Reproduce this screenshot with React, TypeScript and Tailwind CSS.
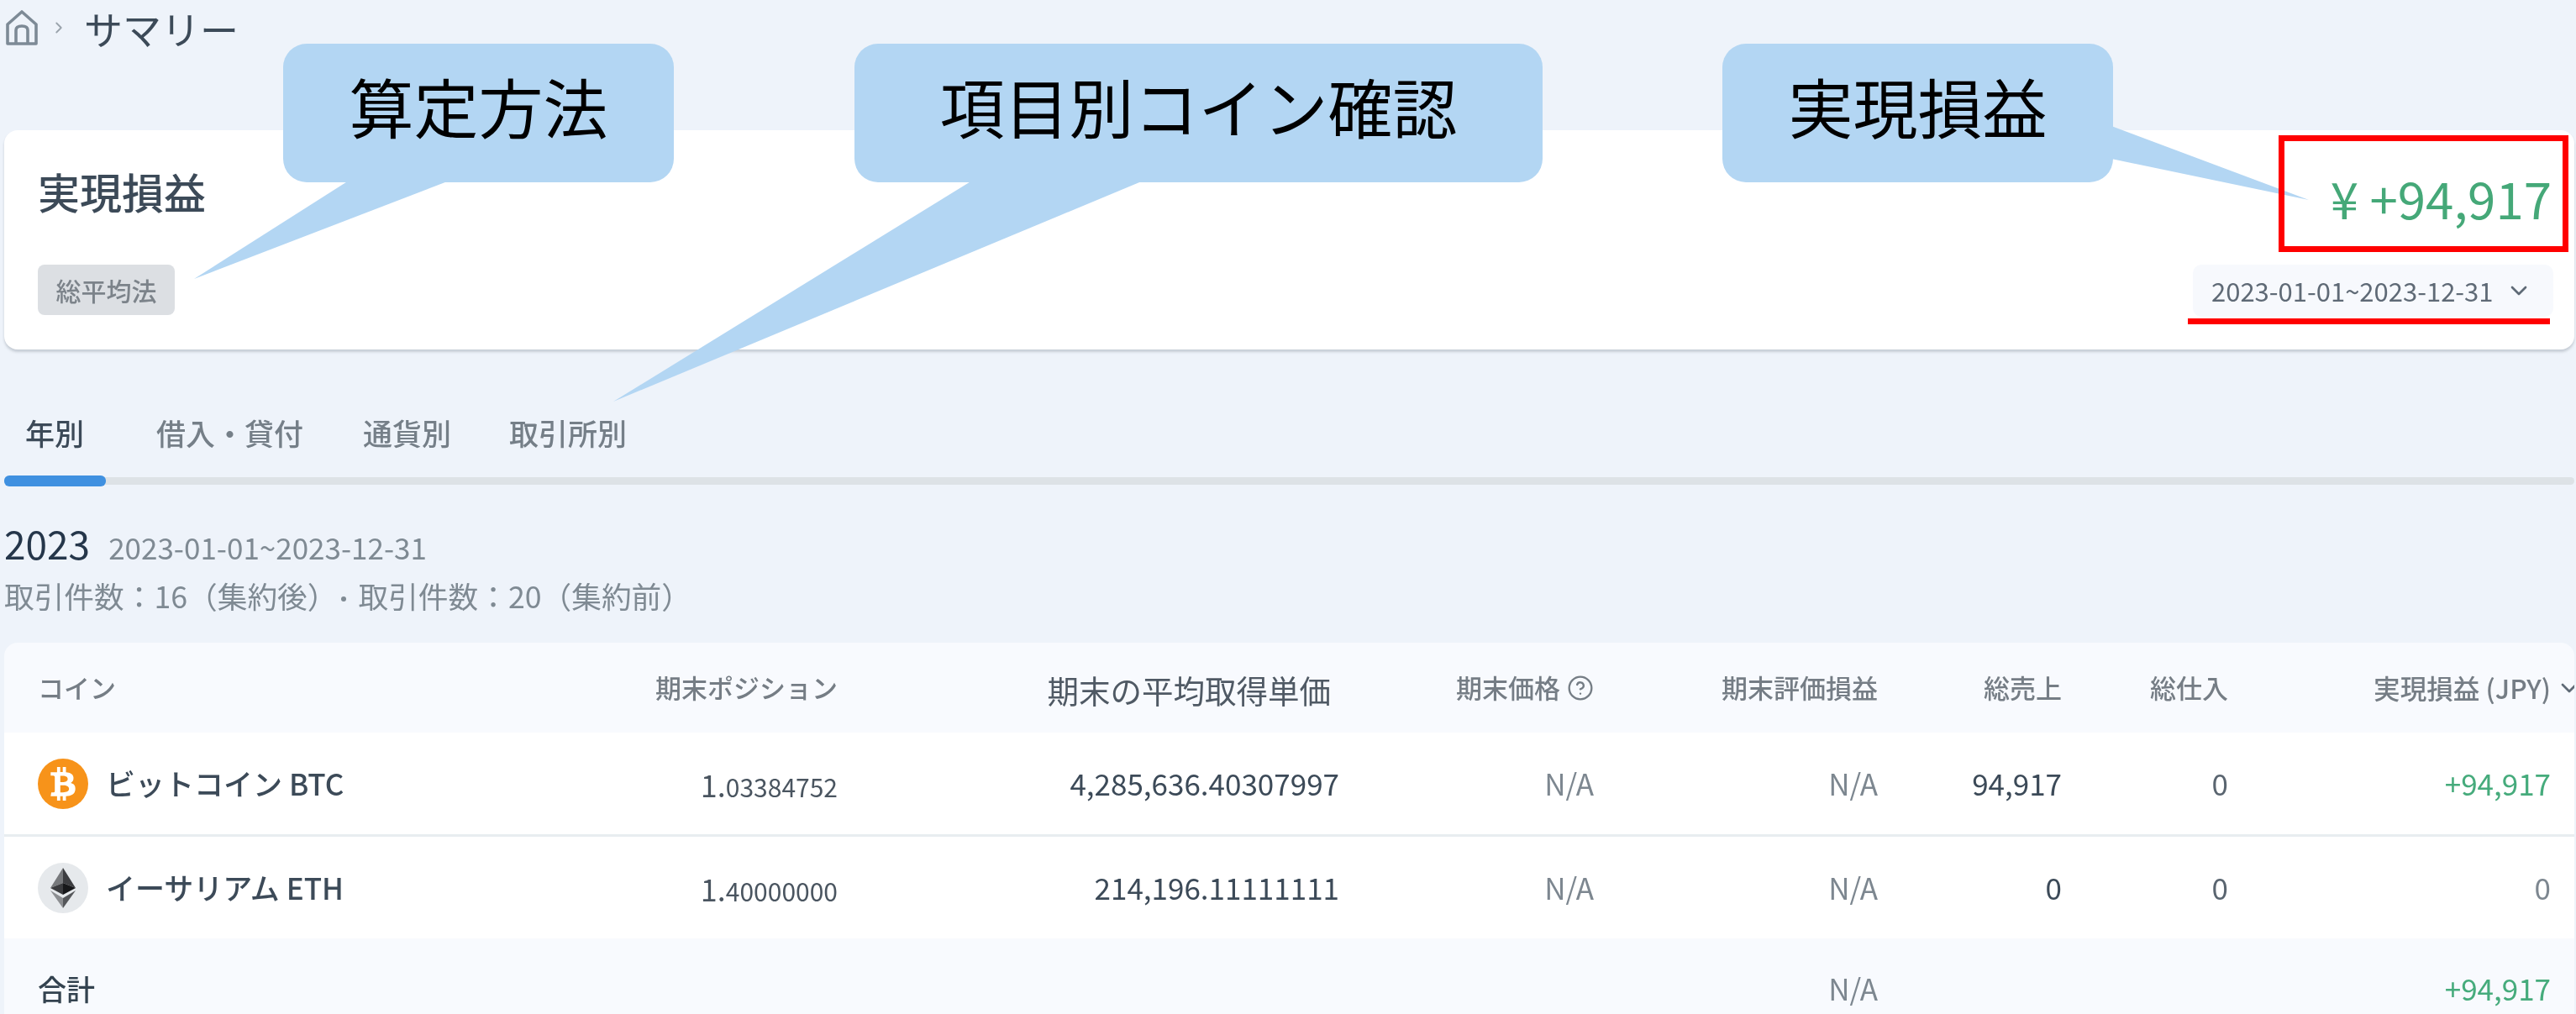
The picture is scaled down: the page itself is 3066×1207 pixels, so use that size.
import { ChevronDown, ChevronRight, CircleHelp } from "lucide-react";
import { FaBtc } from "react-icons/fa";

const cols = "grid grid-cols-[656px_296px_597px_303px_338px_219px_198px_384px_31px] pl-[40px] items-center";

function Home() {
  return (
    <svg viewBox="0 0 38 42" className="w-[38px] h-[42px]" fill="none" stroke="#7d8a96" strokeWidth="3.6" strokeLinejoin="round">
      <path d="M2 17 L19 2 L36 17 V40 H2 Z" />
      <path d="M12 40 V24 Q12 19 19 19 Q26 19 26 24 V40" />
    </svg>
  );
}

function Callout({ className, text }: { className: string; text: string }) {
  return (
    <div className={`absolute top-[52px] h-[165px] pb-[18px] rounded-[28px] bg-[#b3d6f3] flex items-center justify-center text-[77px] leading-none text-black ${className}`}>
      {text}
    </div>
  );
}

function EthIcon() {
  return (
    <div className="w-[60px] h-[60px] rounded-full bg-[#e6e9ec] flex items-center justify-center">
      <svg viewBox="0 0 32 50" className="w-[32px] h-[50px]">
        <polygon points="16,1 1,25 16,19" fill="#77797c" />
        <polygon points="16,1 31,25 16,19" fill="#3c3d40" />
        <polygon points="1,25 16,33 16,19" fill="#3a3b3e" />
        <polygon points="31,25 16,33 16,19" fill="#17181a" />
        <polygon points="1,28 16,49 16,37" fill="#8c8e91" />
        <polygon points="31,28 16,49 16,37" fill="#55575a" />
      </svg>
    </div>
  );
}

function Head({ children }: { children: React.ReactNode }) {
  return <div className="text-right text-[31px] font-medium text-[#757d85]">{children}</div>;
}

function Num({ children, className = "text-[#7d8790]" }: { children: React.ReactNode; className?: string }) {
  return <div className={`text-right text-[35px] ${className}`}>{children}</div>;
}

function Row({ icon, name, whole, frac, avg, sales, pnl, pnlClass, first }: { icon: React.ReactNode; name: string; whole: string; frac: string; avg: string; sales: string; pnl: string; pnlClass: string; first: boolean }) {
  return (
    <div className={`${cols} bg-white ${first ? "h-[124px] border-b-[3px] border-[#e8edf0]" : "h-[121px]"}`}>
      <div className="flex items-center gap-[21px]">
        {icon}
        <span className="text-[35px] font-medium text-[#3c4a58]">{name}</span>
      </div>
      <div className="text-right text-[#4a5560]">
        <span className="text-[36px]">{whole}</span>
        <span className="text-[30px]">{frac}</span>
      </div>
      <Num className="text-[#3c4a58]">{avg}</Num>
      <Num>N/A</Num>
      <Num>N/A</Num>
      <Num className="text-[#3c4a58]">{sales}</Num>
      <Num className="text-[#5a6570]">0</Num>
      <Num className={pnlClass}>{pnl}</Num>
    </div>
  );
}

export default function App() {
  return (
    <div className="relative w-[3066px] h-[1207px] overflow-hidden bg-[#eef3fa] pl-[5px] pr-[2px] blur-[0.7px] font-['Noto_Sans_CJK_JP','Noto_Sans',sans-serif]">
      <div className="flex items-center h-[66px] pl-[2px]">
        <Home />
        <ChevronRight className="w-[22px] h-[22px] ml-[14px] mr-[19px] text-[#9aa3ac]" strokeWidth={2} />
        <span className="text-[46px] leading-none text-[#3c4a58]">サマリー</span>
      </div>

      <div className="mt-[89px] h-[261px] bg-white rounded-[16px] shadow-[0_3px_3px_rgba(150,160,170,0.45)] flex justify-between pl-[40px] pr-[27px]">
        <div className="flex flex-col items-start">
          <div className="mt-[42px] text-[50px] leading-[60px] font-medium text-[#3c4a58]">実現損益</div>
          <div className="mt-[58px] w-[163px] h-[60px] rounded-[8px] bg-[#dcdfe3] flex items-center justify-center text-[30px] font-medium text-[#7c838a]">総平均法</div>
        </div>
        <div className="flex flex-col items-end">
          <div className="mt-[42px] text-[60px] leading-[76px] text-[#45a878]">¥ +94,917</div>
          <div className="mt-[42px] mr-[-2px] w-[429px] h-[62px] rounded-[10px] bg-[#f7f9fd] flex items-center pl-[22px] text-[31px] text-[#5f6a76]">
            <span>2023-01-01~2023-12-31</span>
            <ChevronDown className="ml-[14px] w-[32px] h-[32px]" strokeWidth={2} />
          </div>
        </div>
      </div>

      <div className="mt-[79px] flex items-center h-[41px] text-[35px] font-medium text-[#757f88]">
        <span className="ml-[25px] text-[#3c4a58]">年別</span>
        <span className="ml-[86px]">借入・貸付</span>
        <span className="ml-[71px]">通貨別</span>
        <span className="ml-[69px]">取引所別</span>
      </div>
      <div className="mt-[32px] h-[9px] bg-[#dde2e6] rounded-full">
        <div className="relative top-[-2px] w-[121px] h-[13px] bg-[#3f90e0] rounded-[6px]" />
      </div>

      <div className="mt-[39px] flex items-baseline h-[60px]">
        <span className="text-[46px] leading-[60px] text-[#25364a]">2023</span>
        <span className="ml-[22px] text-[35px] text-[#7f8a93]">2023-01-01~2023-12-31</span>
      </div>
      <div className="mt-[10px] h-[46px] leading-[46px] text-[35.7px] text-[#7f8a93] flex items-center">
        <span>取引件数：16（集約後）</span>
        <span className="ml-[4px] mr-[15px] w-[6px] h-[6px] rounded-full bg-[#7f8a93] mt-[8px]" />
        <span>取引件数：20（集約前）</span>
      </div>

      <div className="mt-[33px] rounded-t-[16px] overflow-hidden">
        <div className={`${cols} h-[107px] bg-[#f8fafe]`}>
          <div className="text-[31px] font-medium text-[#757d85]">コイン</div>
          <Head>期末ポジション</Head>
          <div className="text-right text-[37.5px] leading-[60px] pr-[10px] pt-[4px] text-[#4f5964]">期末の平均取得単価</div>
          <div className="text-[31px] font-medium text-[#757d85] flex items-center justify-end gap-[8px]">期末価格<CircleHelp className="w-[32px] h-[32px]" strokeWidth={1.75} /></div>
          <Head>期末評価損益</Head>
          <Head>総売上</Head>
          <Head>総仕入</Head>
          <div className="text-right text-[31.6px] font-medium text-[#757d85]">実現損益 (JPY)</div>
          <ChevronDown className="ml-[6px] w-[32px] h-[32px] text-[#5f6a76]" strokeWidth={2} />
        </div>
        <Row
          icon={<div className="w-[60px] h-[60px] rounded-full bg-[#f7931a] flex items-center justify-center text-white"><FaBtc className="w-[40px] h-[40px]" /></div>}
          name="ビットコイン BTC" whole="1." frac="03384752" avg="4,285,636.40307997" sales="94,917" pnl="+94,917" pnlClass="text-[#46ab7c]" first
        />
        <Row
          icon={<EthIcon />}
          name="イーサリアム ETH" whole="1." frac="40000000" avg="214,196.11111111" sales="0" pnl="0" pnlClass="text-[#7d8790]" first={false}
        />
        <div className={`${cols} h-[118px] bg-[#f8fafe]`}>
          <div className="text-[34px] font-medium text-[#33424f]">合計</div>
          <div /><div /><div />
          <Num>N/A</Num>
          <div /><div />
          <Num className="text-[#46ab7c]">+94,917</Num>
        </div>
      </div>

      <svg className="absolute inset-0 w-[3066px] h-[1207px] pointer-events-none">
        <polygon points="415,215 535,215 231,332" fill="#b3d6f3" />
        <polygon points="1157,215 1361,215 730,478" fill="#b3d6f3" />
        <polygon points="2513,150 2513,189 2748,238" fill="#b3d6f3" />
      </svg>
      <Callout className="left-[337px] w-[465px]" text="算定方法" />
      <Callout className="left-[1017px] w-[819px]" text="項目別コイン確認" />
      <Callout className="left-[2050px] w-[465px]" text="実現損益" />

      <div className="absolute left-[2712px] top-[161px] w-[345px] h-[139px] border-[7px] border-[#ff0000]" />
      <div className="absolute left-[2604px] top-[379px] w-[431px] h-[7px] bg-[#ff0000]" />
    </div>
  );
}
